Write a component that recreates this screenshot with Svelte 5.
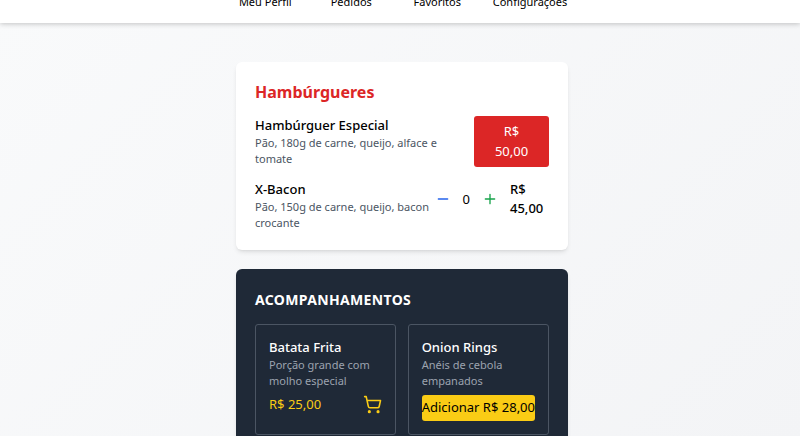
<script>
  const links = ['Meu Perfil', 'Pedidos', 'Favoritos', 'Configurações'];
  let quantity = $state(0);
</script>

<header>
  <nav>
    {#each links as link}
      <a href="#{link}">{link}</a>
    {/each}
  </nav>
</header>

<main>
  <section class="card">
    <h2>Hambúrgueres</h2>
    <div class="row">
      <div class="info">
        <h3>Hambúrguer Especial</h3>
        <p>Pão, 180g de carne, queijo, alface e tomate</p>
      </div>
      <button class="buy">R$ 50,00</button>
    </div>
    <div class="row">
      <div class="info">
        <h3>X-Bacon</h3>
        <p>Pão, 150g de carne, queijo, bacon crocante</p>
      </div>
      <div class="stepper">
        <button class="icon minus" aria-label="Diminuir" onclick={() => (quantity = Math.max(0, quantity - 1))}>
          <svg viewBox="0 0 24 24"><path d="M5 12h14" /></svg>
        </button>
        <span>{quantity}</span>
        <button class="icon plus" aria-label="Aumentar" onclick={() => quantity++}>
          <svg viewBox="0 0 24 24"><path d="M5 12h14M12 5v14" /></svg>
        </button>
        <span class="price">R$ 45,00</span>
      </div>
    </div>
  </section>

  <section class="card dark">
    <h2>Acompanhamentos</h2>
    <div class="grid">
      <article>
        <h3>Batata Frita</h3>
        <p>Porção grande com molho especial</p>
        <div class="offer">
          <span>R$ 25,00</span>
          <button class="icon cart" aria-label="Adicionar ao carrinho">
            <svg viewBox="0 0 24 24">
              <circle cx="8" cy="21" r="1" />
              <circle cx="19" cy="21" r="1" />
              <path d="M2.05 2.05h2l2.66 12.42a2 2 0 0 0 2 1.58h9.78a2 2 0 0 0 1.95-1.57l1.65-7.43H5.12" />
            </svg>
          </button>
        </div>
      </article>
      <article>
        <h3>Onion Rings</h3>
        <p>Anéis de cebola empanados</p>
        <button class="add">Adicionar R$ 28,00</button>
      </article>
    </div>
  </section>
</main>

<style>
  :global(body) {
    margin: 0;
    min-height: 100vh;
    overflow: hidden;
    font: 13px/19px "Noto Sans", sans-serif;
    color: #000;
    background: linear-gradient(135deg, #f9fafb, #f3f4f6);
  }
  h2, h3, p { margin: 0; }
  button {
    border: 0;
    padding: 0;
    font: inherit;
    color: inherit;
    background: none;
    cursor: pointer;
  }
  header {
    background: #fff;
    box-shadow: 0 1px 5px rgb(0 0 0 / 0.22);
    height: 23px;
    display: flex;
    justify-content: center;
    align-items: flex-end;
    padding-left: 2px;
  }
  nav {
    display: flex;
    gap: 25px;
    padding-bottom: 13px;
  }
  nav a {
    min-width: 61px;
    text-align: center;
    font-size: 11px;
    line-height: 16px;
    color: #000;
    text-decoration: none;
  }
  main {
    display: flex;
    flex-direction: column;
    align-items: center;
    gap: 19px;
    padding: 39px 0 0 4px;
  }
  .card {
    box-sizing: border-box;
    width: 100%;
    max-width: 332px;
    padding: 19px;
    border-radius: 6px;
    background: #fff;
    box-shadow: 0 3px 5px -1px rgb(0 0 0 / 0.1), 0 2px 3px -2px rgb(0 0 0 / 0.1);
    display: flex;
    flex-direction: column;
    gap: 13px;
  }
  h2 {
    font-size: 16px;
    line-height: 22px;
    font-weight: 700;
    color: #dc2626;
  }
  h3 {
    font-size: 13px;
    font-weight: 500;
  }
  p {
    font-size: 11px;
    line-height: 16px;
    color: #4b5563;
  }
  .row {
    display: flex;
  }
  .info { flex: 1; }
  .buy {
    width: 75px;
    padding: 5px 19px 6px;
    border-radius: 3px;
    line-height: 20px;
    color: #fff;
    background: #dc2626;
    margin-left: 19px;
  }
  .stepper {
    display: flex;
    align-items: center;
    align-self: flex-start;
    gap: 12px;
  }
  .icon {
    display: flex;
    border-radius: 3px;
  }
  svg {
    width: 16px;
    height: 16px;
    fill: none;
    stroke: currentColor;
    stroke-width: 2;
    stroke-linecap: round;
    stroke-linejoin: round;
  }
  .cart svg {
    width: 19px;
    height: 19px;
  }
  .minus { color: #2563eb; }
  .plus { color: #16a34a; }
  .price {
    width: 39px;
    font-weight: 500;
  }
  .dark {
    background: #1f2937;
    color: #fff;
  }
  .dark h2 {
    font-size: 14px;
    line-height: 23px;
    letter-spacing: 0.025em;
    text-transform: uppercase;
    color: #fff;
  }
  .grid {
    display: grid;
    grid-template-columns: 1fr 1fr;
    gap: 12px;
  }
  article {
    border: 1px solid #4b5563;
    border-radius: 3px;
    padding: 13px;
  }
  .dark p {
    color: #9ca3af;
    margin-bottom: 6px;
  }
  .offer {
    display: flex;
    justify-content: space-between;
    align-items: center;
    color: #facc15;
  }
  .add {
    width: 100%;
    padding: 3px 0 4px;
    border-radius: 3px;
    white-space: nowrap;
    color: #000;
    background: #facc15;
  }
</style>
